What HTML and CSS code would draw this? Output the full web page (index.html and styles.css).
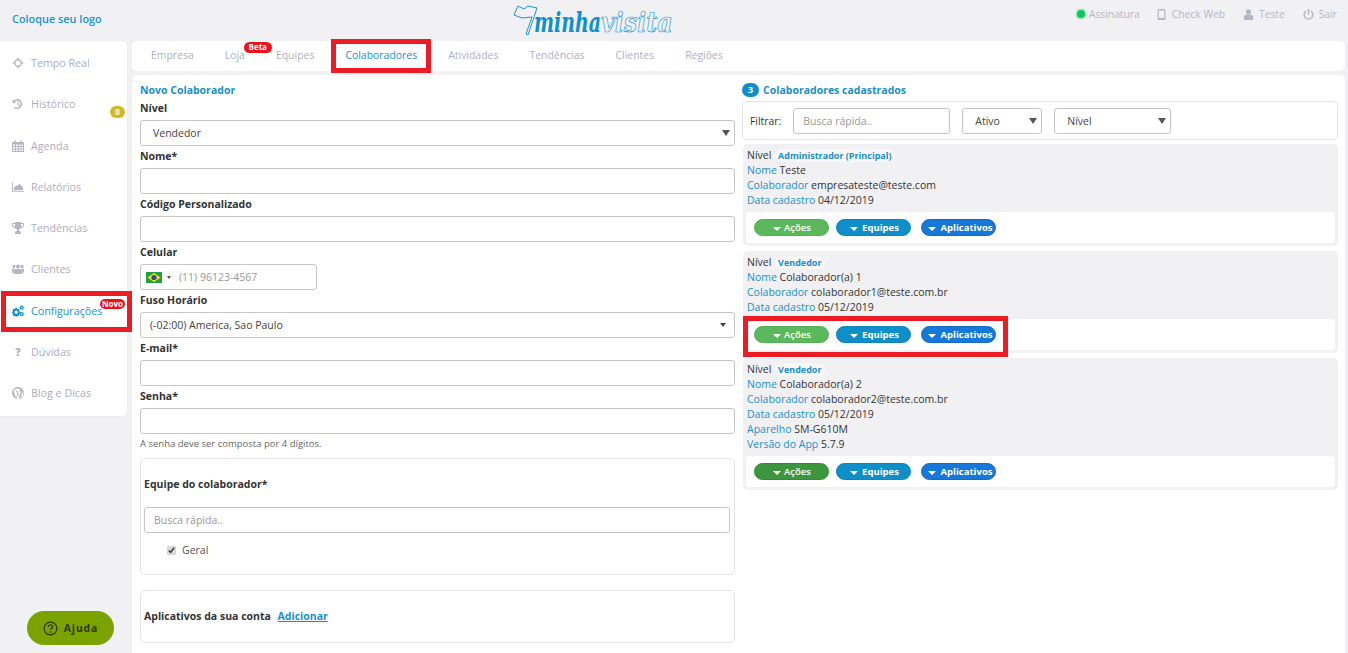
FILE: index.html
```html
<!DOCTYPE html>
<html lang="pt-BR">
<head>
  <meta charset="UTF-8">
  <title>Minha Visita</title>
  <link rel="stylesheet" href="styles.css">
</head>
<body>
  <!-- Topo -->
  <header class="topbar">
    <a class="brand-link">Coloque seu logo</a>
    <svg class="logo" viewBox="0 0 172 34" width="172" height="34">
      <path class="logo-flag" d="M5 2 L11 5 L15 2 L24 4 L15 31 L13 30 L19 13 L9 14 L1 11 Z"/>
      <text class="logo-text logo-bold" transform="translate(21 28) scale(.7 1)">minha</text>
      <text class="logo-text logo-line" transform="translate(88 28) scale(.88 1)">visita</text>
    </svg>
    <nav class="top-links">
      <span class="top-link"><i class="status-dot"></i>Assinatura</span>
      <span class="top-link">
        <svg class="top-icon" viewBox="0 0 10 14"><path d="M1.5 0h7A1.5 1.5 0 0 1 10 1.500v11A1.500 1.500 0 0 1 8.500 14h-7A1.500 1.500 0 0 1 0 12.500v-11A1.500 1.500 0 0 1 1.500 0zM1.500 2v9.500h7V2z"/></svg>Check Web
      </span>
      <span class="top-link">
        <svg class="top-icon" viewBox="0 0 10 12"><circle cx="5" cy="3" r="2.800"/><path d="M0 12V9c0-2 1.500-3 3-3h4c1.500 0 3 1 3 3v3z"/></svg>Teste
      </span>
      <span class="top-link">
        <svg class="top-icon" viewBox="0 0 12 12"><path d="M6 0v6" stroke="#b5b5c3" stroke-width="1.600" fill="none"/><path d="M3.300 2.300a4.800 4.800 0 1 0 5.400 0" stroke="#b5b5c3" stroke-width="1.500" fill="none"/></svg>Sair
      </span>
    </nav>
  </header>

  <div class="page">
    <!-- Menu lateral -->
    <aside class="sidebar">
      <a class="side-item">
        <svg class="side-icon" viewBox="0 0 12 12"><path d="M6 0l1 2.200A4 4 0 0 1 9.800 5L12 6 9.800 7A4 4 0 0 1 7 9.800L6 12 5 9.800A4 4 0 0 1 2.200 7L0 6l2.200-1A4 4 0 0 1 5 2.200zM6 3.500a2.500 2.500 0 1 0 0 5 2.500 2.500 0 0 0 0-5z"/></svg>
        Tempo Real
      </a>
      <a class="side-item">
        <svg class="side-icon" viewBox="0 0 12 12"><path d="M1.500 2.500A5 5 0 1 1 2 10l1-1.200A3.400 3.400 0 1 0 2.800 3.600L4.200 5H.500V1.300zM5.500 3.500h1.200v2.700l1.800 1-.6 1-2.400-1.400z"/></svg>
        Histórico
        <span class="count-badge">0</span>
      </a>
      <a class="side-item">
        <svg class="side-icon" viewBox="0 0 12 12"><path d="M0 2h2.500V.5h1.500V2h4V.5h1.500V2H12v10H0zM1 4.500v1.500h2V4.500zm3 0v1.500h1.800V4.500zm2.800 0v1.500h1.800V4.500zm2.700 0v1.500H11V4.500zM1 7v1.500h2V7zm3 0v1.500h1.800V7zm2.800 0v1.500h1.800V7zm2.700 0v1.500H11V7zM1 9.500V11h2V9.500zm3 0V11h1.800V9.500zm2.800 0V11h1.800V9.500zm2.700 0V11H11V9.500z"/></svg>
        Agenda
      </a>
      <a class="side-item">
        <svg class="side-icon" viewBox="0 0 13 12"><path d="M0 1h1v9.500h12v1H0zM2 9.500V7l2.500-3L6 5l2-2.500L10.500 5 12 6.500v3z"/></svg>
        Relatórios
      </a>
      <a class="side-item">
        <svg class="side-icon" viewBox="0 0 12 12"><path d="M3 0h6v1h3v2c0 2-1.500 3-3.300 3.200L7 7.500V9h1.500v1.500H9V12H3v-1.500h.500V9H5V7.500L3.300 6.200C1.500 6 0 5 0 3V1h3zM1 2v1c0 1 .7 1.800 2 2V2zm10 0H9v3c1.300-.2 2-1 2-2z"/></svg>
        Tendências
      </a>
      <a class="side-item">
        <svg class="side-icon" viewBox="0 0 13 12"><circle cx="6.500" cy="3.200" r="2.200"/><circle cx="2.200" cy="3.200" r="1.700"/><circle cx="10.800" cy="3.200" r="1.700"/><path d="M3.500 6h6c1 0 1.500.8 1.500 2v3.500H2V8c0-1.200.500-2 1.500-2zM0 5.500h2.200L1.500 10H0zm13 0h-2.200l.7 4.500H13z"/></svg>
        Clientes
      </a>
      <a class="side-item side-item-active">
        <svg class="side-icon" viewBox="0 0 13 12"><path fill-rule="evenodd" d="M3.800 2.500h1.400l.3 1 1 .5 1-.4.8 1-.6.900.2 1 1 .4v1.300l-1 .4-.2 1 .6.900-1 .9-.9-.5-1 .4-.3 1H3.800l-.3-1-1-.4-.9.5-1-.9.600-.9-.2-1-1-.4V6.900l1-.4.200-1-.6-.9.800-1 1 .4 1-.5zm.7 3a1.800 1.800 0 1 0 0 3.600 1.800 1.800 0 0 0 0-3.600z"/><path fill-rule="evenodd" d="M10.500 0a2.300 2.300 0 1 1 0 4.600 2.300 2.300 0 0 1 0-4.600zm0 1.400a.9.900 0 1 0 0 1.800.9.900 0 0 0 0-1.800zM10.500 7a2.300 2.300 0 1 1 0 4.600 2.300 2.300 0 0 1 0-4.600zm0 1.400a.9.900 0 1 0 0 1.800.9.900 0 0 0 0-1.800z"/></svg>
        Configurações
        <span class="new-badge">Novo</span>
      </a>
      <a class="side-item">
        <span class="side-icon side-question">?</span>
        Dúvidas
      </a>
      <a class="side-item">
        <svg class="side-icon" viewBox="0 0 12 12"><path fill-rule="evenodd" d="M6 0a6 6 0 1 1 0 12A6 6 0 0 1 6 0zM1.500 3.800 4 10.800l1.300-3.900-1-2.600H3.500v-.6h3v.6h-.8l1.700 5.200.9-3c.4-1.300-.1-2.200-.5-2.800-.300-.5.100-1 .6-1A4.800 4.800 0 0 0 1.500 3.800zM6 7.200l-1.400 4.100a4.800 4.800 0 0 0 2.900-.1zM10.300 3.700c.2 1 0 2-.4 3L8.500 10.700A4.800 4.800 0 0 0 10.300 3.700z"/></svg>
        Blog e Dicas
      </a>
    </aside>

    <main class="content">
      <!-- Abas -->
      <nav class="tabs">
        <a class="tab">Empresa</a>
        <a class="tab">Loja<span class="beta-badge">Beta</span></a>
        <a class="tab">Equipes</a>
        <a class="tab tab-active">Colaboradores</a>
        <a class="tab">Atividades</a>
        <a class="tab">Tendências</a>
        <a class="tab">Clientes</a>
        <a class="tab">Regiões</a>
      </nav>

      <section class="panel">
        <!-- Formulário -->
        <form class="form-col">
          <h3 class="section-title">Novo Colaborador</h3>
          <label class="field-label">Nível</label>
          <div class="select-wrap">
            <select class="field select-level"><option>Vendedor</option></select>
          </div>
          <label class="field-label">Nome*</label>
          <input class="field" type="text">
          <label class="field-label">Código Personalizado</label>
          <input class="field" type="text">
          <label class="field-label">Celular</label>
          <div class="phone-field">
            <svg class="flag" viewBox="0 0 16 11" width="16" height="11"><rect width="16" height="11" fill="#229e45"/><path d="M8 1l6.500 4.500L8 10 1.500 5.500z" fill="#f8e509"/><circle cx="8" cy="5.500" r="2.600" fill="#2b49a3"/></svg>
            <i class="flag-caret"></i>
            <input class="phone-input" type="text" placeholder="(11) 96123-4567">
          </div>
          <label class="field-label">Fuso Horário</label>
          <div class="select-wrap select-wrap-small">
            <select class="field select-zone"><option>(-02:00) America, Sao Paulo</option></select>
          </div>
          <label class="field-label">E-mail*</label>
          <input class="field" type="text">
          <label class="field-label">Senha*</label>
          <input class="field" type="password">
          <p class="hint">A senha deve ser composta por 4 dígitos.</p>

          <div class="box box-team">
            <h4 class="box-title">Equipe do colaborador*</h4>
            <input class="field" type="text" placeholder="Busca rápida..">
            <label class="check-row"><input type="checkbox" checked> Geral</label>
          </div>

          <div class="box box-apps">
            <h4 class="box-title">Aplicativos da sua conta <a class="add-link">Adicionar</a></h4>
          </div>
        </form>

        <!-- Lista de colaboradores -->
        <div class="list-col">
          <h3 class="section-title"><span class="title-count">3</span>Colaboradores cadastrados</h3>
          <div class="filter-bar">
            <span class="filter-label">Filtrar:</span>
            <input class="field filter-search" type="text" placeholder="Busca rápida..">
            <div class="select-wrap filter-status">
              <select class="field"><option>Ativo</option></select>
            </div>
            <div class="select-wrap filter-level">
              <select class="field"><option>Nível</option></select>
            </div>
          </div>

          <article class="person">
            <div class="person-info">
              <p class="person-level">Nível <span class="level-tag">Administrador (Principal)</span></p>
              <p><span class="key">Nome</span> Teste</p>
              <p><span class="key">Colaborador</span> empresateste@teste.com</p>
              <p><span class="key">Data cadastro</span> 04/12/2019</p>
            </div>
            <div class="person-actions">
              <button class="pill pill-green" type="button"><i class="caret"></i>Ações</button>
              <button class="pill pill-cyan" type="button"><i class="caret"></i>Equipes</button>
              <button class="pill pill-blue" type="button"><i class="caret"></i>Aplicativos</button>
            </div>
          </article>

          <article class="person">
            <div class="person-info">
              <p class="person-level">Nível <span class="level-tag">Vendedor</span></p>
              <p><span class="key">Nome</span> Colaborador(a) 1</p>
              <p><span class="key">Colaborador</span> colaborador1@teste.com.br</p>
              <p><span class="key">Data cadastro</span> 05/12/2019</p>
            </div>
            <div class="person-actions">
              <button class="pill pill-green" type="button"><i class="caret"></i>Ações</button>
              <button class="pill pill-cyan" type="button"><i class="caret"></i>Equipes</button>
              <button class="pill pill-blue" type="button"><i class="caret"></i>Aplicativos</button>
            </div>
          </article>

          <article class="person">
            <div class="person-info">
              <p class="person-level">Nível <span class="level-tag">Vendedor</span></p>
              <p><span class="key">Nome</span> Colaborador(a) 2</p>
              <p><span class="key">Colaborador</span> colaborador2@teste.com.br</p>
              <p><span class="key">Data cadastro</span> 05/12/2019</p>
              <p><span class="key">Aparelho</span> SM-G610M</p>
              <p><span class="key">Versão do App</span> 5.7.9</p>
            </div>
            <div class="person-actions">
              <button class="pill pill-green-dark" type="button"><i class="caret"></i>Ações</button>
              <button class="pill pill-cyan" type="button"><i class="caret"></i>Equipes</button>
              <button class="pill pill-blue" type="button"><i class="caret"></i>Aplicativos</button>
            </div>
          </article>
        </div>
      </section>
    </main>
  </div>

  <!-- Marcações em vermelho sobre a tela -->
  <div class="mark mark-tab"></div>
  <div class="mark mark-side"></div>
  <div class="mark mark-actions"></div>

  <button class="help-btn" type="button">
    <svg viewBox="0 0 16 16" width="15" height="15"><circle cx="8" cy="8" r="6.800" fill="none" stroke="#2f3a08" stroke-width="1.300"/><path d="M5.800 6.300A2.200 2.200 0 1 1 8.700 8.400c-.5.200-.7.500-.7 1.200" fill="none" stroke="#2f3a08" stroke-width="1.300"/><circle cx="8" cy="11.600" r=".9" fill="#2f3a08"/></svg>
    Ajuda
  </button>
</body>
</html>
```

FILE: styles.css
```css
* {
  box-sizing: border-box;
}

html, body {
  height: 653px;
  overflow: hidden;
}

body {
  margin: 0;
  background-color: #f1f1f4;
  color: #333;
  font-family: "Open Sans", Arial, sans-serif;
  font-size: 10.500px;
}

p, h3, h4 {
  margin: 0;
}

/* Topo */
.topbar {
  position: relative;
  display: flex;
  align-items: center;
  justify-content: space-between;
  height: 41px;
  padding: 0 11px 5px 12px;
}

.brand-link {
  color: #1a94c9;
  font-weight: 600;
  font-size: 10.900px;
}

.logo {
  position: absolute;
  left: 513px;
  top: 4px;
}

.logo-flag {
  fill: none;
  stroke: #1b96cc;
  stroke-width: 1;
}

.logo-text {
  font-family: "DejaVu Serif", serif;
  font-style: italic;
  font-weight: bold;
  font-size: 27px;
}

.logo-bold {
  fill: #0f90c8;
}

.logo-line {
  fill: #f1f1f4;
  stroke: #1b96cc;
  stroke-width: .7;
}

.top-links {
  display: flex;
  gap: 18px;
  margin-bottom: 8px;
}

.top-link {
  display: flex;
  align-items: center;
  gap: 5px;
  color: #b5b5c3;
  font-size: 10.300px;
}

.top-link:first-child {
  gap: 4px;
  margin-right: -2px;
}

.status-dot {
  width: 8px;
  height: 8px;
  border-radius: 50%;
  background-color: #0fc95a;
  box-shadow: 0 0 3px #0fc95a;
}

.top-icon {
  height: 11px;
  width: 11px;
  fill: #b5b5c3;
}

/* Estrutura */
.page {
  display: flex;
  align-items: flex-start;
  gap: 5px;
  padding-right: 3px;
}

.sidebar {
  flex: 0 0 127px;
  height: 375px;
  padding-top: 1.500px;
  background-color: #fff;
  border-radius: 0 5px 5px 0;
  box-shadow: 0 0 1px #d5d5dc;
}

.side-item {
  position: relative;
  display: flex;
  align-items: center;
  gap: 7px;
  height: 41.250px;
  padding-left: 12px;
  color: #adadbb;
  font-size: 10.700px;
}

.side-icon {
  flex: 0 0 12px;
  width: 12px;
  height: 12px;
  fill: #b5b5c3;
}

.side-question {
  font-weight: 800;
  text-align: center;
  line-height: 12px;
}

.side-item-active {
  color: #1a94c9;
}

.side-item-active .side-icon {
  fill: #0f8fc9;
}

.count-badge {
  position: absolute;
  left: 110px;
  top: 22px;
  width: 15px;
  height: 12px;
  border-radius: 6px;
  background-color: #d4b81f;
  color: #fff;
  font-size: 8px;
  font-weight: 700;
  line-height: 12px;
  text-align: center;
}

.new-badge, .beta-badge {
  position: absolute;
  background-color: #f0101c;
  color: #fff;
  font-size: 8px;
  font-weight: 700;
  line-height: 10px;
  text-align: center;
  border-radius: 6px;
}

.new-badge {
  left: 100px;
  top: 9px;
  width: 25px;
}

.beta-badge {
  left: 19px;
  top: 1px;
  width: 28px;
  height: 11px;
}

.content {
  flex: 1;
  min-width: 0;
}

/* Abas */
.tabs {
  display: flex;
  gap: 31px;
  height: 30px;
  padding-left: 19px;
  background-color: #fff;
  border-radius: 5px;
}

.tab {
  position: relative;
  color: #b0b0be;
  font-size: 10.450px;
  line-height: 28px;
}

.tab-active {
  color: #1a94c9;
}

/* Painel */
.panel {
  display: flex;
  gap: 7px;
  height: 578px;
  margin-top: 4px;
  padding: 8px 7px 0 8px;
  background-color: #fff;
  border-radius: 5px 5px 0 0;
}

.form-col {
  flex: 0 0 595px;
}

.list-col {
  flex: 1;
  min-width: 0;
}

.section-title {
  height: 14px;
  color: #1a8fc7;
  font-size: 10.500px;
  font-weight: 700;
  line-height: 14px;
}

.field-label {
  display: block;
  height: 22px;
  padding-top: 2px;
  color: #333;
  font-size: 10.500px;
  font-weight: 700;
  line-height: 16px;
}

.form-col .section-title + .field-label {
  height: 20px;
  padding-top: 0;
  margin-top: 3px;
}

.field {
  display: block;
  width: 100%;
  height: 26px;
  padding: 0 9px;
  background-color: #fff;
  border: 1px solid #c6c6c6;
  border-radius: 3px;
  color: #444;
  font-family: inherit;
  font-size: 10.500px;
  outline: none;
}

.field::placeholder, .phone-input::placeholder {
  color: #999;
  opacity: 1;
}

.select-wrap {
  position: relative;
}

.select-wrap select {
  appearance: none;
  padding-left: 12px;
}

.select-wrap::after {
  content: "";
  position: absolute;
  right: 5px;
  top: 10px;
  border-style: solid;
  border-width: 6px 4px 0;
  border-color: #555 transparent transparent;
  pointer-events: none;
}

.select-wrap-small::after {
  right: 9px;
  top: 11px;
  border-width: 4px 3.500px 0;
  border-color: #444 transparent transparent;
}

.select-wrap-small select {
  padding-left: 9px;
}

.phone-field {
  display: flex;
  align-items: center;
  width: 177px;
  height: 26px;
  padding-left: 5px;
  border: 1px solid #c6c6c6;
  border-radius: 3px;
}

.flag-caret {
  margin: 0 8px 0 5px;
  border-style: solid;
  border-width: 3px 2.500px 0;
  border-color: #555 transparent transparent;
}

.phone-input {
  flex: 1;
  min-width: 0;
  border: none;
  outline: none;
  padding: 0;
  font-family: inherit;
  font-size: 10.500px;
}

.hint {
  margin-top: 3px;
  color: #666;
  font-size: 9.500px;
  line-height: 13px;
}

.box {
  padding: 0 4px 0 3px;
  border: 1px solid #e3e3e8;
  border-radius: 5px;
}

.box-team {
  height: 117px;
  margin-top: 8px;
}

.box-apps {
  height: 53px;
  margin-top: 15px;
}

.box-title {
  font-size: 10.500px;
  font-weight: 700;
  color: #333;
  line-height: 16px;
}

.box-team .box-title {
  padding: 17px 0 15px;
}

.box-apps .box-title {
  padding-top: 17px;
}

.add-link {
  margin-left: 4px;
  color: #1a8fc7;
  text-decoration: underline;
}

.check-row {
  display: flex;
  align-items: center;
  gap: 6px;
  margin: 10px 0 0 23px;
  color: #555;
  font-size: 10.500px;
}

.check-row input {
  width: 9px;
  height: 9px;
  margin: 0;
  accent-color: #d8d8d8;
}

/* Lista */
.title-count {
  display: inline-block;
  width: 17px;
  height: 14px;
  margin-right: 4px;
  border-radius: 7px;
  background-color: #0f8fc9;
  color: #fff;
  font-size: 9px;
  text-align: center;
  vertical-align: top;
}

.filter-bar {
  display: flex;
  align-items: center;
  height: 39px;
  margin-top: 4px;
  padding-left: 7px;
  border: 1px solid #e3e3e8;
  border-radius: 5px;
}

.filter-label {
  margin-right: 12px;
  font-size: 10.400px;
}

.filter-search {
  width: 157px;
}

.filter-status {
  width: 80px;
  margin-left: 12px;
}

.filter-level {
  width: 117px;
  margin-left: 12px;
}

.person {
  margin: 4px 0 0 1px;
  padding: 4px 3px 3px;
  background-color: #f1f1f4;
  border-radius: 5px;
}

.person + .person {
  margin-top: 5px;
}

.person-info {
  padding-left: 1px;
  color: #333;
  font-size: 10.500px;
  line-height: 15px;
}

.person-level {
  height: 15px;
}

.key {
  color: #1a8fc7;
}

.level-tag {
  margin-left: 1px;
  padding: 0 3px;
  border-radius: 6px;
  background-color: #f7f7f9;
  color: #1a8fc7;
  font-size: 9px;
  font-weight: 700;
}

.person-actions {
  display: flex;
  height: 31px;
  margin-top: 4px;
  padding: 7px 8px;
  background-color: #fff;
  border-radius: 4px;
}

.pill {
  display: flex;
  align-items: center;
  justify-content: center;
  gap: 4px;
  width: 75px;
  height: 17px;
  margin-right: 7px;
  padding: 0;
  border: 1px solid transparent;
  border-radius: 9px;
  color: #fff;
  font-family: inherit;
  font-size: 9.500px;
  font-weight: 700;
}

.pill + .pill + .pill {
  margin-left: 3px;
}

.pill-green {
  padding-left: 1px;
  background-color: #5cb85c;
  border-color: #57ad57;
  font-weight: 600;
  gap: 3px;
}

.pill-green-dark {
  padding-left: 1px;
  background-color: #3d963d;
  border-color: #378a37;
  font-weight: 600;
  gap: 3px;
}

.pill-cyan {
  padding-left: 2px;
  background-color: #0f8fc9;
  border-color: #0d86bd;
}

.pill-blue {
  padding-left: 4px;
  background-color: #1678d8;
  border-color: #126cc4;
}

.caret {
  margin-top: 2px;
  border-style: solid;
  border-width: 4px 4px 0;
  border-color: #fff transparent transparent;
}

/* Marcações */
.mark {
  position: absolute;
  border: 5px solid #ed1c24;
  pointer-events: none;
}

.mark-tab {
  left: 331px;
  top: 39px;
  width: 100px;
  height: 34px;
}

.mark-side {
  left: 1px;
  top: 291px;
  width: 131px;
  height: 41px;
}

.mark-actions {
  left: 743px;
  top: 316px;
  width: 265px;
  height: 41px;
}

/* Ajuda */
.help-btn {
  position: absolute;
  left: 27px;
  top: 611px;
  display: flex;
  align-items: center;
  justify-content: center;
  gap: 6px;
  width: 87px;
  height: 34px;
  border: none;
  border-radius: 17px;
  background-color: #7ba300;
  color: #2f3a08;
  font-family: inherit;
  font-size: 10.500px;
  font-weight: 700;
  letter-spacing: .8px;
}
```
